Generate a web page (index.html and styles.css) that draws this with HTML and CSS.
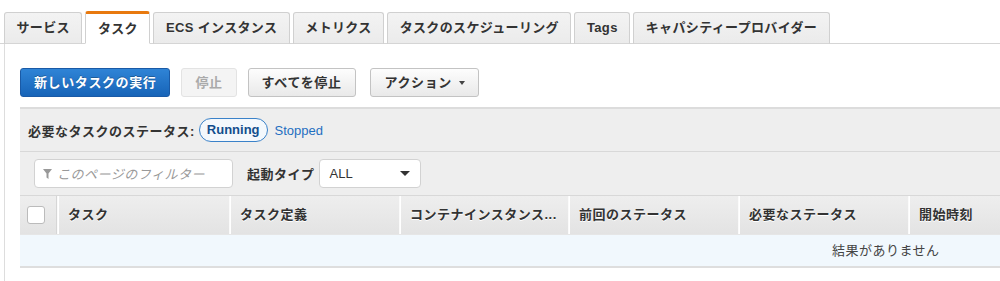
FILE: index.html
```html
<!DOCTYPE html>
<html lang="ja">
<head>
<meta charset="utf-8">
<link rel="stylesheet" href="styles.css">
</head>
<body>
<div class="tabs">
  <div class="tab">サービス</div>
  <div class="tab active">タスク</div>
  <div class="tab">ECS インスタンス</div>
  <div class="tab">メトリクス</div>
  <div class="tab">タスクのスケジューリング</div>
  <div class="tab">Tags</div>
  <div class="tab">キャパシティープロバイダー</div>
</div>
<div class="content">
  <div class="toolbar">
    <button class="btn primary">新しいタスクの実行</button>
    <button class="btn disabled">停止</button>
    <button class="btn">すべてを停止</button>
    <button class="btn action">アクション <span class="caret"></span></button>
  </div>
  <div class="panel">
    <div class="status-row">
      <span class="status-label">必要なタスクのステータス:</span>
      <span class="pill">Running</span>
      <span class="link">Stopped</span>
    </div>
    <div class="filter-row">
      <div class="filter">
        <svg class="funnel" width="9" height="10" viewBox="0 0 9 10"><path d="M0 0H9L5.5 4.5V10L3.5 8.5V4.5Z" fill="#999"/></svg>
        <span class="placeholder">このページのフィルター</span>
      </div>
      <span class="filter-label">起動タイプ</span>
      <div class="select"><span>ALL</span><span class="select-caret"></span></div>
    </div>
    <div class="table">
      <div class="thead">
        <div class="th check"><span class="checkbox"></span></div>
        <div class="th">タスク</div>
        <div class="th">タスク定義</div>
        <div class="th">コンテナインスタンス...</div>
        <div class="th">前回のステータス</div>
        <div class="th">必要なステータス</div>
        <div class="th last">開始時刻</div>
      </div>
      <div class="empty">結果がありません</div>
    </div>
  </div>
</div>
</body>
</html>
```

FILE: styles.css
```css
html, body {
  margin: 0;
  padding: 0;
  background: #fff;
  overflow: hidden;
  width: 1000px;
  height: 281px;
}
body {
  font-family: "Liberation Sans", "Noto Sans CJK JP", sans-serif;
  font-size: 13px;
  letter-spacing: 0.5px;
  color: #333;
}
.tabs {
  display: flex;
  align-items: flex-end;
  padding: 11px 0 0 4px;
  border-bottom: 1px solid #d5d5d5;
  height: 32px;
  box-sizing: content-box;
}
.tab {
  height: 30px;
  line-height: 30px;
  padding: 0 11.5px;
  margin-right: 3px;
  margin-bottom: -1px;
  background: linear-gradient(#f3f3f3, #ebebeb);
  border: 1px solid #d0d0d0;
  border-bottom: 1px solid #d5d5d5;
  border-radius: 3px 3px 0 0;
  font-weight: bold;
  color: #333;
  white-space: nowrap;
  letter-spacing: 0.35px;
}
.tab.active {
  background: #fff;
  border-top: 3px solid #e8790f;
  border-bottom-color: #fff;
  height: 29px;
  line-height: 29px;
}
.content {
  margin-left: 4px;
  border-left: 1px solid #ddd;
  padding: 24px 0 0 15px;
  height: 237px;
  box-sizing: border-box;
}
.toolbar {
  display: flex;
  gap: 11px;
}
.btn {
  font-family: inherit;
  font-size: 13px;
  letter-spacing: 0.6px;
  font-weight: bold;
  height: 29px;
  padding: 0 13px;
  border: 1px solid #c3c3c3;
  border-radius: 3px;
  background: linear-gradient(#fdfdfd, #e9e9e9);
  color: #333;
  white-space: nowrap;
  line-height: 27px;
}
.btn.primary {
  background: linear-gradient(#2f84d6, #1764b8);
  border-color: #1a5aa6;
  color: #fff;
  text-shadow: 0 -1px 0 rgba(0,0,0,0.25);
}
.btn.disabled {
  background: #f4f4f4;
  border-color: #e3e3e3;
  color: #aaa;
}
.btn.action {
  margin-left: 3px;
  padding: 0 13px 0 14px;
}
.caret {
  display: inline-block;
  width: 0;
  height: 0;
  border-left: 3.5px solid transparent;
  border-right: 3.5px solid transparent;
  border-top: 4px solid #444;
  vertical-align: middle;
  margin-left: 3px;
  position: relative;
  top: -1px;
}
.panel {
  margin-top: 10px;
  background: #eee;
  border-top: 2px solid #dcdcdc;
}
.status-row {
  display: flex;
  align-items: center;
  height: 42px;
  padding-left: 8px;
  border-bottom: 1px solid #d8d8d8;
}
.status-label {
  font-weight: bold;
  margin-right: 4px;
}
.pill {
  display: inline-block;
  height: 24px;
  line-height: 22px;
  box-sizing: border-box;
  padding: 0 7px;
  border: 1.5px solid #3b82c9;
  border-radius: 12px;
  color: #124e8d;
  font-weight: bold;
  font-size: 13px;
  letter-spacing: 0;
  background: #f4f8fc;
}
.link {
  color: #1f6fc1;
  margin-left: 7px;
  letter-spacing: 0;
}
.filter-row {
  display: flex;
  align-items: center;
  height: 43px;
  padding-left: 14px;
  border-bottom: 1px solid #d8d8d8;
}
.filter {
  width: 199px;
  height: 29px;
  box-sizing: border-box;
  background: #fff;
  border: 1px solid #d2d2d2;
  border-radius: 4px;
  display: flex;
  align-items: center;
  padding-left: 8px;
}
.funnel {
  margin-right: 5px;
}
.placeholder {
  color: #999;
  font-style: italic;
  font-size: 13px;
}
.filter-label {
  font-weight: bold;
  margin-left: 14px;
  margin-right: 4px;
}
.select {
  width: 102px;
  height: 29px;
  box-sizing: border-box;
  background: #fff;
  border: 1px solid #d2d2d2;
  border-radius: 4px;
  display: flex;
  align-items: center;
  justify-content: space-between;
  padding: 0 10px 0 10px;
  font-size: 13px;
  letter-spacing: 0;
}
.select-caret {
  width: 0;
  height: 0;
  border-left: 5px solid transparent;
  border-right: 5px solid transparent;
  border-top: 5px solid #333;
}
.thead {
  display: flex;
  height: 38px;
  background: linear-gradient(#eeeeee, #e3e3e3);
  border-bottom: 1px solid #e6e6e6;
}
.th {
  width: 170px;
  box-sizing: border-box;
  padding-left: 10px;
  border-left: 1px solid #fafafa;
  box-shadow: inset 1px 0 0 #fff;
  font-weight: bold;
  line-height: 38px;
  color: #333;
  text-shadow: 0 1px 0 #fff;
  white-space: nowrap;
  overflow: hidden;
}
.th.check {
  width: 37px;
  border-left: none;
  box-shadow: none;
  padding-left: 7px;
  display: flex;
  align-items: center;
  border-right: 1px solid #d6d6d6;
}
.th:nth-child(2) { width: 172px; }
.th:nth-child(4) { width: 169px; }
.th.last { flex: 1; }
.checkbox {
  width: 16px;
  height: 16px;
  background: #fff;
  border: 1px solid #bbb;
  border-radius: 3px;
}
.empty {
  height: 31px;
  line-height: 31px;
  background: #f1f8fd;
  border-bottom: 2px solid #dedede;
  padding-left: 812px;
  color: #444;
  white-space: nowrap;
}
```
